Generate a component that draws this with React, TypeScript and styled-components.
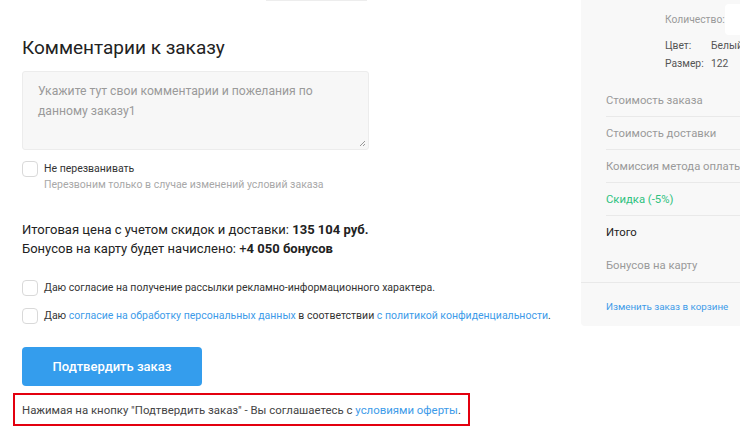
import styled, { createGlobalStyle } from 'styled-components'

const GlobalStyle = createGlobalStyle`
  html, body {
    margin: 0;
    padding: 0;
    background: #ffffff;
    overflow: hidden;
  }
  body {
    font-family: Roboto, "Liberation Sans", Arial, sans-serif;
    color: #222222;
  }
`

const Page = styled.div`
  display: flex;
  width: 740px;
  height: 436px;
  overflow: hidden;
`

const Main = styled.div`
  width: 559px;
  flex-shrink: 0;
  padding-left: 22px;
  box-sizing: border-box;
`

const TopStub = styled.div`
  width: 101px;
  height: 1px;
  margin-left: 244px;
  background: #ededed;
`

const Title = styled.h2`
  margin: 35px 0 0;
  font-size: 19px;
  line-height: 24px;
  font-weight: 400;
  color: #222222;
`

const Comment = styled.div`
  position: relative;
  width: 347px;
  height: 79px;
  margin-top: 11px;
  padding: 9px 15px;
  box-sizing: border-box;
  background: #f7f7f7;
  border: 1px solid #ececec;
  border-radius: 3px;
  font-size: 12.2px;
  line-height: 20px;
  color: #9a9a9a;
`

const Grip = styled.svg`
  position: absolute;
  right: 2px;
  bottom: 2px;
`

const CheckRow = styled.div<{ $top: number }>`
  display: flex;
  align-items: flex-start;
  gap: 6px;
  margin-top: ${(p) => p.$top}px;
`

const Box = styled.span`
  width: 16px;
  height: 16px;
  flex-shrink: 0;
  box-sizing: border-box;
  border: 1px solid #d9d9d9;
  border-radius: 4px;
  background: #ffffff;
`

const CheckText = styled.div`
  font-size: 10.5px;
  line-height: 16px;
  color: #333333;
  white-space: nowrap;
`

const Hint = styled.div`
  font-size: 10.5px;
  line-height: 15px;
  color: #a8a8a8;
`

const Link = styled.a`
  color: #3d9be9;
  text-decoration: none;
`

const Totals = styled.div`
  margin-top: 28px;
  font-size: 13px;
  line-height: 19px;
  color: #222222;

  b {
    font-weight: 700;
  }
`

const Button = styled.button`
  display: block;
  width: 180px;
  height: 39px;
  margin-top: 23px;
  border: none;
  border-radius: 4px;
  background: #349ded;
  color: #ffffff;
  font-family: inherit;
  font-size: 13px;
  font-weight: 500;
`

const Notice = styled.div`
  width: 457px;
  height: 33px;
  margin: 7px 0 0 -9px;
  padding-left: 7px;
  box-sizing: border-box;
  border: 2px solid #e3000f;
  font-size: 11.4px;
  line-height: 30px;
  color: #444444;
  white-space: nowrap;
`

const Side = styled.aside`
  width: 200px;
  flex-shrink: 0;
  margin-left: 22px;
  height: 326px;
  background: #f8f8f8;
  border-radius: 0 0 0 4px;
`

const Product = styled.div`
  padding: 4px 0 0 84px;
  font-size: 10.3px;
`

const QtyRow = styled.div`
  display: flex;
  align-items: center;
  height: 31px;
  color: #9a9a9a;
`

const QtyLabel = styled.span`
  width: 64px;
`

const QtyInput = styled.div`
  width: 60px;
  height: 31px;
  background: #ffffff;
  border-radius: 4px;
`

const Prop = styled.div<{ $top: number }>`
  display: grid;
  grid-template-columns: 46px auto;
  margin-top: ${(p) => p.$top}px;
  line-height: 18px;
  color: #555555;
`

const Summary = styled.div`
  margin-top: 11px;
`

const SumRow = styled.div<{ $tone?: 'green' | 'dark'; $line?: boolean }>`
  margin-left: 25px;
  height: 33px;
  display: flex;
  align-items: center;
  box-sizing: border-box;
  border-bottom: 1px solid ${(p) => (p.$line ? '#e9e9e9' : 'transparent')};
  font-size: 11.3px;
  white-space: nowrap;
  color: ${(p) =>
    p.$tone === 'green' ? '#2ec27e' : p.$tone === 'dark' ? '#222222' : '#9a9a9a'};
`

const Divider = styled.div`
  height: 1px;
  background: #e9e9e9;
`

const EditLink = styled(Link)`
  display: block;
  margin: 17px 0 0 25px;
  font-size: 9.8px;
  line-height: 14px;
  white-space: nowrap;
`

const CheckItem = ({ top, children }: any) => (
  <CheckRow $top={top}>
    <Box />
    <div>{children}</div>
  </CheckRow>
)

export default function App() {
  return (
    <Page>
      <GlobalStyle />
      <Main>
        <TopStub />
        <Title>Комментарии к заказу</Title>
        <Comment>
          Укажите тут свои комментарии и пожелания по данному заказу1
          <Grip width="7" height="7" viewBox="0 0 7 7">
            <path d="M6 1 L1 6 M6 4 L4 6" stroke="#999" strokeWidth="1" />
          </Grip>
        </Comment>
        <CheckItem top={11}>
          <CheckText>Не перезванивать</CheckText>
          <Hint>Перезвоним только в случае изменений условий заказа</Hint>
        </CheckItem>
        <Totals>
          Итоговая цена с учетом скидок и доставки: <b>135 104 руб.</b>
          <br />
          Бонусов на карту будет начислено: +<b>4 050 бонусов</b>
        </Totals>
        <CheckItem top={22}>
          <CheckText>
            Даю согласие на получение рассылки рекламно-информационного характера.
          </CheckText>
        </CheckItem>
        <CheckItem top={12}>
          <CheckText>
            Даю <Link href="#">согласие на обработку персональных данных</Link> в
            соответствии <Link href="#">с политикой конфиденциальности</Link>.
          </CheckText>
        </CheckItem>
        <Button>Подтвердить заказ</Button>
        <Notice>
          Нажимая на кнопку "Подтвердить заказ" - Вы соглашаетесь с{' '}
          <Link href="#">условиями оферты</Link>.
        </Notice>
      </Main>
      <Side>
        <Product>
          <QtyRow>
            <QtyLabel>Количество:</QtyLabel>
            <QtyInput />
          </QtyRow>
          <Prop $top={2}>
            <span>Цвет:</span>
            <span>Белый</span>
          </Prop>
          <Prop $top={0}>
            <span>Размер:</span>
            <span>122</span>
          </Prop>
        </Product>
        <Summary>
          <SumRow $line>Стоимость заказа</SumRow>
          <SumRow $line>Стоимость доставки</SumRow>
          <SumRow $line>Комиссия метода оплаты</SumRow>
          <SumRow $line $tone="green">Скидка (-5%)</SumRow>
          <SumRow $tone="dark">Итого</SumRow>
          <SumRow>Бонусов на карту</SumRow>
          <Divider />
        </Summary>
        <EditLink href="#">Изменить заказ в корзине</EditLink>
      </Side>
    </Page>
  )
}
